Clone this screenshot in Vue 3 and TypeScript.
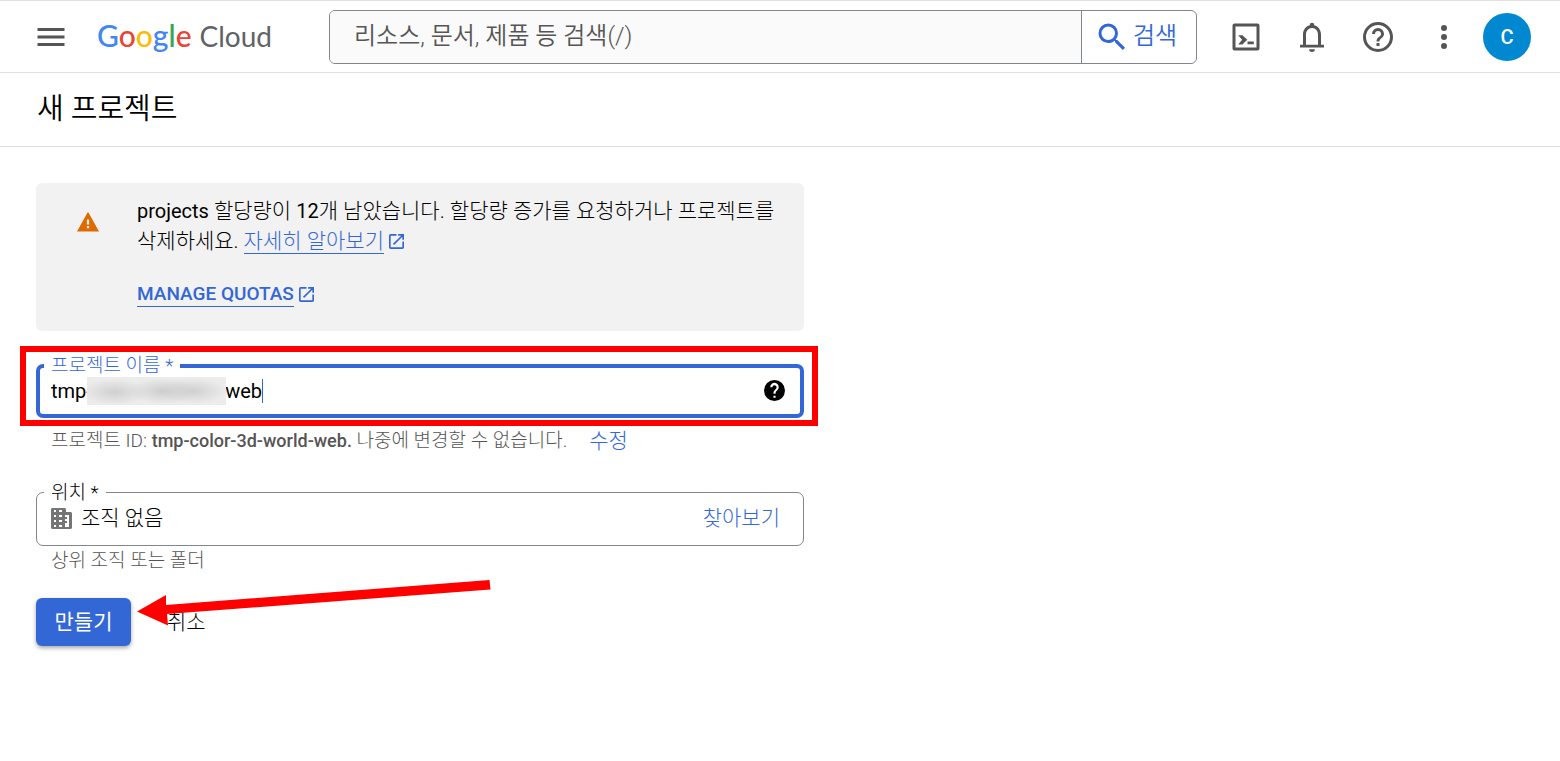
<script setup lang="ts">
import { ref } from 'vue'

const query = ref('')
const projectName = ref('tmp-color-3d-world-web')
const brand = [
  { letter: 'G', tone: 'blue' },
  { letter: 'o', tone: 'red' },
  { letter: 'o', tone: 'yellow' },
  { letter: 'g', tone: 'blue' },
  { letter: 'l', tone: 'green' },
  { letter: 'e', tone: 'red' },
]
const openIcon = 'M19 19H5V5h7V3H5a2 2 0 0 0-2 2v14a2 2 0 0 0 2 2h14c1.1 0 2-.9 2-2v-7h-2v7zM14 3v2h3.59l-9.83 9.83 1.41 1.41L19 6.41V10h2V3h-7z'
</script>

<template>
  <div class="page">
    <header class="topbar">
      <button class="icon-button menu" aria-label="메뉴">
        <svg viewBox="0 0 24 24"><path d="M3 18h18v-2H3v2zm0-5h18v-2H3v2zm0-7v2h18V6H3z" /></svg>
      </button>
      <a class="brand" href="#" aria-label="Google Cloud">
        <span class="google"><span v-for="(item, i) in brand" :key="i" :class="item.tone">{{ item.letter }}</span></span>
        <span class="cloud">Cloud</span>
      </a>
      <form class="search" @submit.prevent>
        <input v-model="query" type="text" aria-label="검색어" placeholder="리소스, 문서, 제품 등 검색(/)">
        <button type="submit">
          <svg viewBox="0 0 24 24"><path d="M15.500 14h-.79l-.28-.27A6.470 6.470 0 0 0 16 9.500 6.500 6.500 0 1 0 9.500 16c1.610 0 3.090-.59 4.230-1.570l.27.28v.79l5.200 5.190 1.490-1.490L15.500 14zm-6 0a4.500 4.500 0 1 1 0-9 4.500 4.500 0 0 1 0 9z" /></svg>
          <span>검색</span>
        </button>
      </form>
      <nav class="tools">
        <button class="icon-button" aria-label="Cloud Shell">
          <svg viewBox="0 0 24 24"><path fill-rule="evenodd" d="M4.300 3h15.400A1.300 1.300 0 0 1 21 4.300v15.400a1.300 1.300 0 0 1-1.300 1.300H4.300A1.300 1.300 0 0 1 3 19.700V4.300A1.300 1.300 0 0 1 4.300 3zM5 5v14h14V5zM6.800 10.800h2.800l3.300 3.100-3.300 3.100H6.800l2.600-3.100zM13 15h4.200v1.800H13z" /></svg>
        </button>
        <button class="icon-button" aria-label="알림">
          <svg viewBox="0 0 24 24"><path d="M12 22a2 2 0 0 0 2-1.800h-4a2 2 0 0 0 2 1.800zM18 17.200v-6.700c0-3.070-1.640-5.640-4.500-6.320V4a1.500 1.500 0 0 0-3 0v.18C7.630 4.860 6 7.420 6 10.500v6.700H4V19h16v-1.800h-2zm-2 0H8v-6.700C8 8 9.510 6 12 6s4 2 4 4.500v6.700z" /></svg>
        </button>
        <button class="icon-button" aria-label="도움말">
          <svg viewBox="0 0 24 24"><path d="M11 18h2v-2h-2v2zm1-16a10 10 0 1 0 0 20 10 10 0 0 0 0-20zm0 18a8 8 0 1 1 0-16 8 8 0 0 1 0 16zm0-14a4 4 0 0 0-4 4h2a2 2 0 1 1 4 0c0 2-3 1.750-3 5h2c0-2.250 3-2.500 3-5a4 4 0 0 0-4-4z" /></svg>
        </button>
        <button class="icon-button" aria-label="더보기">
          <svg viewBox="0 0 24 24"><circle cx="12" cy="6" r="2" /><circle cx="12" cy="12" r="2" /><circle cx="12" cy="18" r="2" /></svg>
        </button>
        <button class="avatar" aria-label="계정">C</button>
      </nav>
    </header>

    <div class="titlebar"><h1>새 프로젝트</h1></div>

    <main>
      <section class="notice">
        <svg class="warning" viewBox="0 0 22 20"><path fill-rule="evenodd" d="M10.500.5h1L22 19.500H0zM9.900 7.500v5h2.200v-5zM9.900 14v2.200h2.200V14z" /></svg>
        <div>
          <p>projects <span class="ko">할당량이</span> 12<span class="ko">개 남았습니다. 할당량 증가를 요청하거나 프로젝트를</span>{{ ' ' }}<span class="ko">삭제하세요.</span>{{ ' ' }}<a class="external" href="#"><span class="ko">자세히 알아보기</span><svg viewBox="3 3 18 18"><path :d="openIcon" /></svg></a></p>
          <a class="external quotas" href="#"><span>MANAGE QUOTAS</span><svg viewBox="3 3 18 18"><path :d="openIcon" /></svg></a>
        </div>
      </section>

      <form @submit.prevent>
        <div class="marked">
          <fieldset class="field focused">
            <legend><label for="project-name">프로젝트 이름 *</label></legend>
            <div class="name-input">
              <input id="project-name" v-model="projectName" type="text">
              <span class="redaction" />
              <span class="caret" />
            </div>
            <button class="help" type="button" aria-label="프로젝트 이름 도움말">
              <svg viewBox="2 2 20 20"><path d="M12 2a10 10 0 1 0 0 20 10 10 0 0 0 0-20zm1 17h-2v-2h2v2zm2.070-7.750-.9.920C13.450 12.900 13 13.500 13 15h-2v-.5c0-1.100.45-2.100 1.170-2.830l1.240-1.260A2 2 0 1 0 10 9H8a4 4 0 1 1 7.070 2.250z" /></svg>
            </button>
          </fieldset>
        </div>
        <p class="hint"><span>프로젝트 ID: <b>tmp-color-3d-world-web.</b> 나중에 변경할 수 없습니다.</span><button type="button" class="link">수정</button></p>

        <fieldset class="field location">
          <legend><label for="location">위치 *</label></legend>
          <svg class="building" viewBox="0 0 21 21"><path fill-rule="evenodd" d="M1 0h13l1 1v3h5l1 1v15l-1 1H1l-1-1V1zM3 2v2h2V2zm5 0v2h3V2zM3 7v2h2V7zm5 0v2h3V7zM3 12v2h2v-2zm5 0v2h3v-2zM3 17v2h2v-2zm5 0v2h3v-2zM14 7v2h2v2h-2v2h2v2h-2v4h4V7z" /></svg>
          <input id="location" type="text" value="조직 없음" readonly>
          <button type="button" class="link">찾아보기</button>
        </fieldset>
        <p class="hint">상위 조직 또는 폴더</p>

        <div class="actions">
          <button class="create" type="submit">만들기</button>
          <button class="cancel" type="button">취소</button>
          <svg class="arrow" viewBox="0 0 356 50"><path d="M0 32.500 29 16v10L352.500 1l1 9.500L30 35l1 11.500z" /></svg>
        </div>
      </form>
    </main>
  </div>
</template>

<style>
body {
  margin: 0;
  background: #fff;
}
</style>

<style scoped>
.page {
  font-family: Roboto, "Noto Sans CJK KR", sans-serif;
  font-size: 20px;
  font-weight: 400;
  line-height: 30px;
  color: #000;
}
* { box-sizing: border-box; }
p, h1 { margin: 0; }
button, input {
  margin: 0;
  padding: 0;
  border: 0;
  background: none;
  font: inherit;
  color: inherit;
  outline: 0;
}
button { cursor: pointer; }
svg { display: block; fill: currentColor; }
a { color: #3367d6; text-decoration: none; }

.topbar {
  display: flex;
  align-items: center;
  height: 73px;
  padding: 0 29px 0 33px;
  border-top: 1px solid #e0e0e0;
  border-bottom: 1px solid #e0e0e0;
  color: #555;
}
.icon-button svg { width: 36px; height: 36px; }
.brand {
  display: flex;
  align-items: baseline;
  gap: 8px;
  width: 232px;
  margin-left: 28px;
  padding-bottom: 3px;
  font-family: Lato, sans-serif;
  font-size: 28px;
  white-space: nowrap;
}
.brand .google { font-size: 30px; font-weight: 500; }
.brand .blue { color: #4285f4; }
.brand .red { color: #ea4335; }
.brand .yellow { color: #fbbc04; }
.brand .green { color: #34a853; }
.brand .cloud { color: #5f6368; }
.search {
  display: flex;
  flex: 1;
  height: 54px;
  border: 1px solid #80868b;
  border-radius: 6px;
  overflow: hidden;
  font-weight: 350;
  font-size: 24px;
}
.search input {
  flex: 1;
  min-width: 0;
  padding: 0 24px 2px;
  background: #fafafa;
}
.search input::placeholder { color: #555; opacity: 1; }
.search button {
  display: flex;
  align-items: center;
  gap: 3px;
  width: 115px;
  padding-left: 12px;
  border-left: 1px solid #80868b;
  color: #3367d6;
}
.search button svg { width: 36px; height: 36px; }
.search button span { padding-bottom: 2px; }
.tools {
  display: flex;
  align-items: center;
  gap: 30px;
  margin-left: 31px;
}
.avatar {
  width: 48px;
  height: 48px;
  margin-left: -9px;
  border-radius: 50%;
  background: #0288d1;
  color: #fff;
  font-weight: 500;
}

.titlebar {
  height: 74px;
  padding: 16px 37px;
  border-bottom: 1px solid #e0e0e0;
}
h1 {
  font-size: 29px;
  font-weight: 350;
  line-height: 40px;
}

main {
  max-width: 840px;
  padding: 36px;
}
.notice {
  display: flex;
  gap: 38px;
  padding: 13px 24px 24px 41px;
  border-radius: 6px;
  background: #f2f2f2;
}
.warning {
  flex: none;
  width: 22px;
  height: 20px;
  margin-top: 16px;
  color: #de6b00;
}
.notice p { margin-bottom: 26px; }
.ko { font-size: 21px; font-weight: 300; line-height: 28px; }
.external {
  display: inline-flex;
  align-items: center;
  gap: 5px;
}
.external > span {
  border-bottom: 1px solid #3367d6;
  line-height: 24px;
}
.external svg { width: 15px; height: 15px; }
.quotas { display: flex; font-size: 19px; font-weight: 500; }

.marked {
  margin: 15px -14px 0 -16px;
  padding: 3px 8px 2px 10px;
  border: 6px solid #f00;
}
.field {
  display: flex;
  align-items: center;
  min-width: 0;
  margin: 0;
  padding: 0 23px 13px 7px;
  border: 1px solid #80868b;
  border-radius: 7px;
}
.field legend {
  padding: 0 7px;
  font-size: 19px;
  font-weight: 300;
  line-height: 22px;
}
.focused {
  padding: 0 15px 0 4px;
  border: 4px solid #3367d6;
}
.focused legend { color: #3367d6; }
.name-input {
  position: relative;
  flex: 1;
  height: 37px;
  padding-left: 7px;
}
.name-input input {
  display: block;
  width: 100%;
  height: 28px;
}
.redaction {
  position: absolute;
  top: 0;
  left: 43px;
  width: 139px;
  height: 28px;
  background:
    radial-gradient(ellipse 34px 13px at 28px 15px, #d0d0d0, transparent),
    radial-gradient(ellipse 34px 13px at 76px 14px, #cdcdcd, transparent),
    radial-gradient(ellipse 34px 13px at 106px 14px, #d0d0d0, transparent),
    #ececec;
}
.caret {
  position: absolute;
  top: 2px;
  left: 218px;
  width: 1px;
  height: 24px;
  background: #3367d6;
}
.help svg { width: 21px; height: 21px; }
.help { margin-bottom: 10px; }
.hint {
  display: flex;
  gap: 22px;
  padding-left: 15px;
  font-size: 19px;
  font-weight: 300;
  color: #555;
}
.hint b { font-size: 18px; font-weight: 500; }
.link { color: #3367d6; font-size: 21px; font-weight: 300; }
.location { margin-top: 24px; }
.location legend { padding-top: 2px; }
.location .building {
  width: 21px;
  height: 21px;
  margin: 0 9px 0 7px;
  color: #757575;
}
.location input {
  flex: 1;
  min-width: 0;
  height: 28px;
  font-size: 21px;
  font-weight: 300;
}
.location .link { line-height: 28px; }
.actions {
  position: relative;
  display: flex;
  gap: 36px;
  margin-top: 22px;
}
.create {
  width: 95px;
  height: 48px;
  border-radius: 6px;
  background: #3367d6;
  box-shadow: 0 2px 4px rgba(0, 0, 0, 0.35);
  color: #fff;
  font-size: 21px;
}
.cancel { font-size: 21px; font-weight: 300; }
.arrow {
  position: absolute;
  top: -19px;
  left: 101px;
  width: 356px;
  height: 50px;
  color: #f00;
}
</style>
